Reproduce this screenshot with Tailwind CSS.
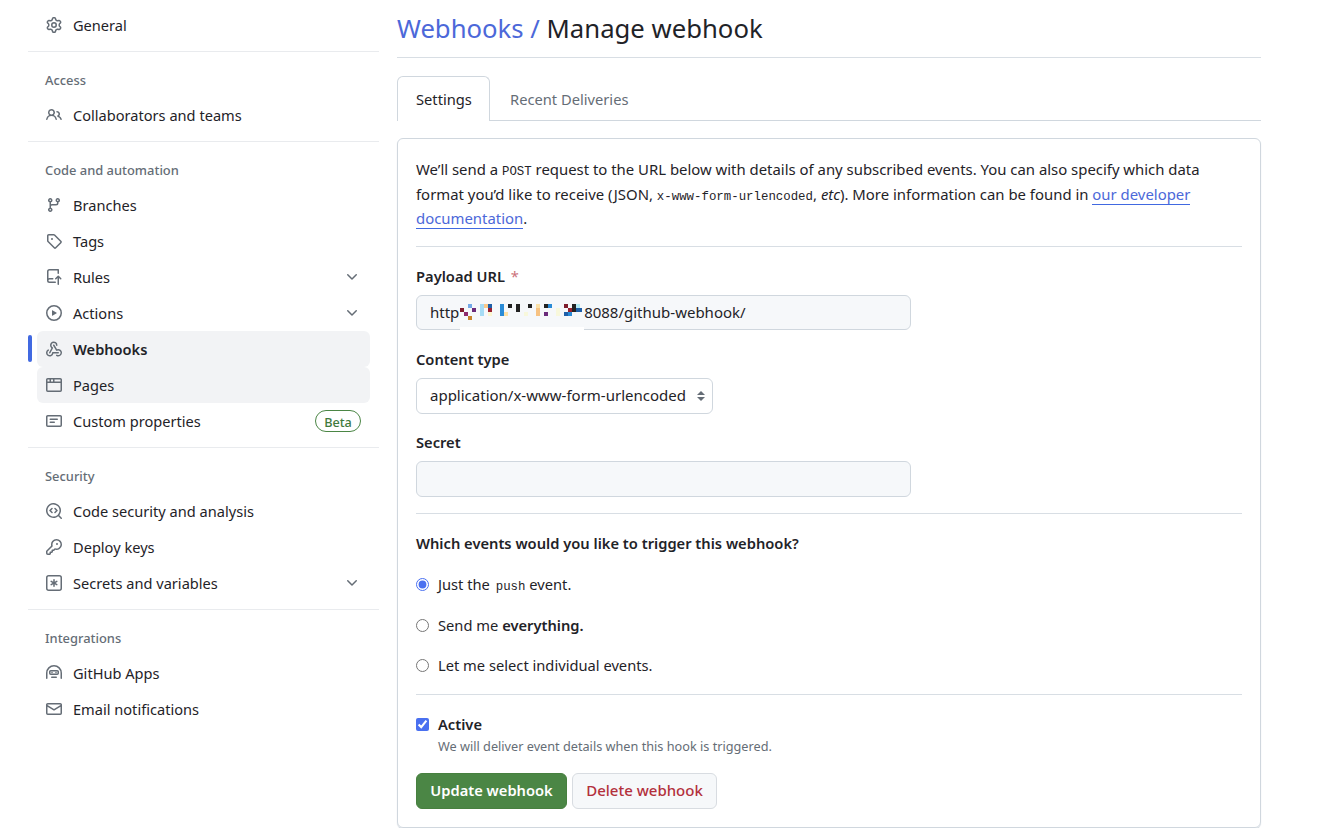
<!DOCTYPE html>
<html lang="en">
  <head>
    <meta charset="UTF-8" />
    <title>Manage webhook</title>
    <script src="https://cdn.jsdelivr.net/npm/@tailwindcss/browser@4"></script>
  </head>
  <body class="bg-white text-[#1f2328] text-[14.6px] font-['Noto_Sans','Open_Sans',sans-serif] overflow-hidden h-[828px]">
    <div class="flex items-start pl-[28px] pt-[7px]">
      <!-- Sidebar -->
      <nav class="w-[351px] shrink-0 [&_a>span]:pt-[2px]">
        <a class="flex items-center h-9 ml-[9px] mr-[9px] px-[9px] gap-[11px]">
          <svg class="size-4 fill-[#656d76]" viewBox="0 0 16 16"><path d="M8 0a8.2 8.2 0 0 1 .701.031C9.444.095 9.99.645 10.16 1.29l.288 1.107c.018.066.079.158.212.224.231.114.454.243.668.386.123.082.233.09.299.071l1.103-.303c.644-.176 1.392.021 1.82.63.27.385.506.792.704 1.218.315.675.111 1.422-.364 1.891l-.814.806c-.049.048-.098.147-.088.294.016.257.016.515 0 .772-.01.147.038.246.088.294l.814.806c.475.469.679 1.216.364 1.891a7.977 7.977 0 0 1-.704 1.217c-.428.61-1.176.807-1.82.63l-1.102-.302c-.067-.019-.177-.011-.3.071a5.909 5.909 0 0 1-.668.386c-.133.066-.194.158-.211.224l-.29 1.106c-.168.646-.715 1.196-1.458 1.26a8.006 8.006 0 0 1-1.402 0c-.743-.064-1.289-.614-1.458-1.26l-.289-1.106c-.018-.066-.079-.158-.212-.224a5.738 5.738 0 0 1-.668-.386c-.123-.082-.233-.09-.299-.071l-1.103.303c-.644.176-1.392-.021-1.82-.63a8.12 8.12 0 0 1-.704-1.218c-.315-.675-.111-1.422.363-1.891l.815-.806c.05-.048.098-.147.088-.294a6.214 6.214 0 0 1 0-.772c.01-.147-.038-.246-.088-.294l-.815-.806C.635 6.045.431 5.298.746 4.623a7.92 7.92 0 0 1 .704-1.217c.428-.61 1.176-.807 1.82-.63l1.102.302c.067.019.177.011.3-.071.214-.143.437-.272.668-.386.133-.066.194-.158.211-.224l.29-1.106C6.009.645 6.556.095 7.299.03 7.53.01 7.764 0 8 0Zm-.571 1.525c-.036.003-.108.036-.137.146l-.289 1.105c-.147.561-.549.967-.998 1.189-.173.086-.34.183-.5.29-.417.278-.97.423-1.529.27l-1.103-.303c-.109-.03-.175.016-.195.045-.22.312-.412.644-.573.99-.014.031-.021.11.059.19l.815.806c.411.406.562.957.53 1.456a4.709 4.709 0 0 0 0 .582c.032.499-.119 1.05-.53 1.456l-.815.806c-.081.08-.073.159-.059.19.162.346.353.677.573.989.02.03.085.076.195.046l1.102-.303c.56-.153 1.113-.008 1.53.27.161.107.328.204.501.29.447.222.85.629.997 1.189l.289 1.105c.029.109.101.143.137.146a6.6 6.6 0 0 0 1.142 0c.036-.003.108-.036.137-.146l.289-1.105c.147-.561.549-.967.998-1.189.173-.086.34-.183.5-.29.417-.278.97-.423 1.529-.27l1.103.303c.109.029.175-.016.195-.045.22-.313.411-.644.573-.99.014-.031.021-.11-.059-.19l-.815-.806c-.411-.406-.562-.957-.53-1.456a4.709 4.709 0 0 0 0-.582c-.032-.499.119-1.05.53-1.456l.815-.806c.081-.08.073-.159.059-.19a6.464 6.464 0 0 0-.573-.989c-.02-.03-.085-.076-.195-.046l-1.102.303c-.56.153-1.113.008-1.53-.27a4.44 4.44 0 0 0-.501-.29c-.447-.222-.85-.629-.997-1.189l-.289-1.105c-.029-.11-.101-.143-.137-.146a6.6 6.6 0 0 0-1.142 0ZM11 8a3 3 0 1 1-6 0 3 3 0 0 1 6 0ZM9.5 8a1.5 1.5 0 1 0-3.001.001A1.5 1.5 0 0 0 9.5 8Z"/></svg>
          <span>General</span>
        </a>
        <hr class="mt-2 border-[#e9ebee]" />

        <h3 class="pl-[17px] pt-[18px] pb-[6px] text-[12.9px] leading-[21px] font-medium text-[#656d76]">Access</h3>
        <a class="flex items-center h-9 ml-[9px] mr-[9px] px-[9px] gap-[11px]">
          <svg class="size-4 fill-[#656d76]" viewBox="0 0 16 16"><path d="M2 5.5a3.5 3.5 0 1 1 5.898 2.549 5.508 5.508 0 0 1 3.034 4.084.75.75 0 1 1-1.482.235 4 4 0 0 0-7.9 0 .75.75 0 0 1-1.482-.236A5.507 5.507 0 0 1 3.102 8.05 3.493 3.493 0 0 1 2 5.5ZM11 4a3.001 3.001 0 0 1 2.22 5.018 5.01 5.01 0 0 1 2.56 3.012.749.749 0 0 1-.885.954.752.752 0 0 1-.549-.514 3.507 3.507 0 0 0-2.522-2.372.75.75 0 0 1-.574-.73v-.352a.75.75 0 0 1 .416-.672A1.5 1.5 0 0 0 11 5.5.75.75 0 0 1 11 4Zm-5.5-.5a2 2 0 1 0-.001 3.999A2 2 0 0 0 5.5 3.5Z"/></svg>
          <span>Collaborators and teams</span>
        </a>
        <hr class="mt-2 border-[#e9ebee]" />

        <h3 class="pl-[17px] pt-[18px] pb-[6px] text-[12.9px] leading-[21px] font-medium text-[#656d76]">Code and automation</h3>
        <a class="flex items-center h-9 ml-[9px] mr-[9px] px-[9px] gap-[11px]">
          <svg class="size-4 fill-[#656d76]" viewBox="0 0 16 16"><path d="M9.5 3.25a2.25 2.25 0 1 1 3 2.122V6A2.5 2.5 0 0 1 10 8.5H6a1 1 0 0 0-1 1v1.128a2.251 2.251 0 1 1-1.5 0V5.372a2.25 2.25 0 1 1 1.5 0v1.836A2.493 2.493 0 0 1 6 7h4a1 1 0 0 0 1-1v-.628A2.25 2.25 0 0 1 9.5 3.25Zm-6 0a.75.75 0 1 0 1.5 0 .75.75 0 0 0-1.5 0Zm8.25-.75a.75.75 0 1 0 0 1.5.75.75 0 0 0 0-1.5ZM4.25 12a.75.75 0 1 0 0 1.5.75.75 0 0 0 0-1.5Z"/></svg>
          <span>Branches</span>
        </a>
        <a class="flex items-center h-9 ml-[9px] mr-[9px] px-[9px] gap-[11px]">
          <svg class="size-4 fill-[#656d76]" viewBox="0 0 16 16"><path d="M1 7.775V2.75C1 1.784 1.784 1 2.75 1h5.025c.464 0 .91.184 1.238.513l6.25 6.25a1.75 1.75 0 0 1 0 2.474l-5.026 5.026a1.75 1.75 0 0 1-2.474 0l-6.25-6.25A1.752 1.752 0 0 1 1 7.775Zm1.5 0c0 .066.026.13.073.177l6.25 6.25a.25.25 0 0 0 .354 0l5.025-5.025a.25.25 0 0 0 0-.354l-6.25-6.25a.25.25 0 0 0-.177-.073H2.75a.25.25 0 0 0-.25.25ZM6 5a1 1 0 1 1 0 2 1 1 0 0 1 0-2Z"/></svg>
          <span>Tags</span>
        </a>
        <a class="flex items-center h-9 ml-[9px] mr-[9px] px-[9px] gap-[11px]">
          <svg class="size-4 fill-[#656d76]" viewBox="0 0 16 16"><path d="M1 2.5A2.5 2.5 0 0 1 3.5 0h8.75a.75.75 0 0 1 .75.75v3.5a.75.75 0 0 1-1.5 0V1.5h-8a1 1 0 0 0-1 1v6.708A2.493 2.493 0 0 1 3.5 9h3.25a.75.75 0 0 1 0 1.5H3.5a1 1 0 0 0 0 2h5.75a.75.75 0 0 1 0 1.5H3.5A2.5 2.5 0 0 1 1 11.5Zm13.23 7.79h-.001l-1.224-1.224v6.184a.75.75 0 0 1-1.5 0V9.066L10.28 10.29a.75.75 0 0 1-1.06-1.061l2.505-2.504a.75.75 0 0 1 1.06 0L15.29 9.23a.751.751 0 0 1-.018 1.042.751.751 0 0 1-1.042.018Z"/></svg>
          <span>Rules</span>
          <svg class="size-4 ml-auto mr-px fill-[#656d76]" viewBox="0 0 16 16"><path d="M12.78 5.22a.749.749 0 0 1 0 1.06l-4.25 4.25a.749.749 0 0 1-1.06 0L3.22 6.28a.749.749 0 1 1 1.06-1.06L8 8.939l3.72-3.719a.749.749 0 0 1 1.06 0Z"/></svg>
        </a>
        <a class="flex items-center h-9 ml-[9px] mr-[9px] px-[9px] gap-[11px]">
          <svg class="size-4 fill-[#656d76]" viewBox="0 0 16 16"><path d="M8 0a8 8 0 1 1 0 16A8 8 0 0 1 8 0ZM1.5 8a6.5 6.5 0 1 0 13 0 6.5 6.5 0 0 0-13 0Zm4.879-2.773 4.264 2.559a.25.25 0 0 1 0 .428l-4.264 2.559A.25.25 0 0 1 6 10.559V5.442a.25.25 0 0 1 .379-.215Z"/></svg>
          <span>Actions</span>
          <svg class="size-4 ml-auto mr-px fill-[#656d76]" viewBox="0 0 16 16"><path d="M12.78 5.22a.749.749 0 0 1 0 1.06l-4.25 4.25a.749.749 0 0 1-1.06 0L3.22 6.28a.749.749 0 1 1 1.06-1.06L8 8.939l3.72-3.719a.749.749 0 0 1 1.06 0Z"/></svg>
        </a>
        <a class="relative flex items-center h-9 ml-[9px] mr-[9px] px-[9px] gap-[11px] rounded-md bg-[#f2f3f5] font-semibold">
          <span class="absolute -left-[9px] top-[4px] h-[27px] w-[4px] rounded-md bg-[#4169e1]"></span>
          <svg class="size-4 fill-[#656d76]" viewBox="0 0 16 16"><path d="M5.5 4.25a2.25 2.25 0 0 1 4.5 0 .75.75 0 0 0 1.5 0 3.75 3.75 0 1 0-6.14 2.889l-2.272 4.258a.75.75 0 0 0 1.324.706L7 7.25a.75.75 0 0 0-.309-1.015A2.25 2.25 0 0 1 5.5 4.25Z"/><path d="M7.364 3.607a.75.75 0 0 1 1.03.257l2.608 4.349a3.75 3.75 0 1 1-.628 6.785.75.75 0 0 1 .752-1.299 2.25 2.25 0 1 0-.033-3.88.75.75 0 0 1-1.03-.256L7.107 4.636a.75.75 0 0 1 .257-1.03Z"/><path d="M2.9 8.776A.75.75 0 0 1 2.625 9.8 2.25 2.25 0 1 0 6 11.75a.75.75 0 0 1 .75-.751h5.5a.75.75 0 0 1 0 1.5H7.425a3.751 3.751 0 1 1-5.55-3.998.75.75 0 0 1 1.024.274Z"/></svg>
          <span>Webhooks</span>
        </a>
        <a class="flex items-center h-9 ml-[9px] mr-[9px] px-[9px] gap-[11px] rounded-md bg-[#f2f3f5]">
          <svg class="size-4 fill-[#656d76]" viewBox="0 0 16 16"><path d="M0 2.75C0 1.784.784 1 1.75 1h12.5c.966 0 1.75.784 1.75 1.75v10.5A1.75 1.75 0 0 1 14.25 15H1.75A1.75 1.75 0 0 1 0 13.25ZM14.5 6h-13v7.25c0 .138.112.25.25.25h12.5a.25.25 0 0 0 .25-.25Zm-6-3.5v2h6V2.75a.25.25 0 0 0-.25-.25ZM5 2.5v2h2v-2Zm-3.25 0a.25.25 0 0 0-.25.25V4.5h2v-2Z"/></svg>
          <span>Pages</span>
        </a>
        <a class="flex items-center h-9 ml-[9px] mr-[9px] px-[9px] gap-[11px]">
          <svg class="size-4 fill-[#656d76]" viewBox="0 0 16 16"><path d="M0 3.75C0 2.784.784 2 1.75 2h12.5c.966 0 1.75.784 1.75 1.75v8.5A1.75 1.75 0 0 1 14.25 14H1.75A1.75 1.75 0 0 1 0 12.25Zm1.75-.25a.25.25 0 0 0-.25.25v8.5c0 .138.112.25.25.25h12.5a.25.25 0 0 0 .25-.25v-8.5a.25.25 0 0 0-.25-.25ZM3.5 6.25a.75.75 0 0 1 .75-.75h7a.75.75 0 0 1 0 1.5h-7a.75.75 0 0 1-.75-.75Zm.75 2.25h4a.75.75 0 0 1 0 1.5h-4a.75.75 0 0 1 0-1.5Z"/></svg>
          <span>Custom properties</span>
          <span class="ml-auto h-[22px] w-[46px] rounded-full border border-[#4b8645] text-[#3f7a3c] text-[12.7px] font-medium leading-[18px] text-center">Beta</span>
        </a>
        <hr class="mt-2 border-[#e9ebee]" />

        <h3 class="pl-[17px] pt-[18px] pb-[6px] text-[12.9px] leading-[21px] font-medium text-[#656d76]">Security</h3>
        <a class="flex items-center h-9 ml-[9px] mr-[9px] px-[9px] gap-[11px]">
          <svg class="size-4 fill-[#656d76]" viewBox="0 0 16 16"><path d="M8.47 4.97a.75.75 0 0 0 0 1.06L9.94 7.5 8.47 8.97a.75.75 0 1 0 1.06 1.06l2-2a.75.75 0 0 0 0-1.06l-2-2a.75.75 0 0 0-1.06 0ZM6.53 6.03a.75.75 0 0 0-1.06-1.06l-2 2a.75.75 0 0 0 0 1.06l2 2a.75.75 0 1 0 1.06-1.06L5.06 7.5l1.47-1.47Z"/><path d="M12.246 13.307a7.501 7.501 0 1 1 1.06-1.06l2.474 2.473a.749.749 0 0 1-.326 1.275.749.749 0 0 1-.734-.215ZM1.5 7.5a6.002 6.002 0 0 0 3.608 5.504 6.002 6.002 0 0 0 6.486-1.117.748.748 0 0 1 .292-.293A6 6 0 1 0 1.5 7.5Z"/></svg>
          <span>Code security and analysis</span>
        </a>
        <a class="flex items-center h-9 ml-[9px] mr-[9px] px-[9px] gap-[11px]">
          <svg class="size-4 fill-[#656d76]" viewBox="0 0 16 16"><path d="M10.5 0a5.499 5.499 0 1 1-1.288 10.848l-.932.932a.749.749 0 0 1-.53.22H7v.75a.749.749 0 0 1-.22.53l-.5.5a.749.749 0 0 1-.53.22H5v.75a.749.749 0 0 1-.22.53l-.5.5a.749.749 0 0 1-.53.22h-2A1.75 1.75 0 0 1 0 14.25v-2c0-.199.079-.389.22-.53l4.932-4.932A5.5 5.5 0 0 1 10.5 0Zm-4 5.5c-.001.431.069.86.205 1.269a.75.75 0 0 1-.181.768L1.5 12.56v1.69c0 .138.112.25.25.25h1.69l.06-.06v-1.19a.75.75 0 0 1 .75-.75h1.19l.06-.06v-1.19a.75.75 0 0 1 .75-.75h1.19l1.023-1.025a.75.75 0 0 1 .768-.18A4 4 0 1 0 6.5 5.5ZM11 6a1 1 0 1 1 0-2 1 1 0 0 1 0 2Z"/></svg>
          <span>Deploy keys</span>
        </a>
        <a class="flex items-center h-9 ml-[9px] mr-[9px] px-[9px] gap-[11px]">
          <svg class="size-4 fill-[#656d76]" viewBox="0 0 16 16"><path d="M0 2.75A2.75 2.75 0 0 1 2.75 0h10.5A2.75 2.75 0 0 1 16 2.75v10.5A2.75 2.75 0 0 1 13.25 16H2.75A2.75 2.75 0 0 1 0 13.25ZM2.75 1.5c-.69 0-1.25.56-1.25 1.25v10.5c0 .69.56 1.25 1.25 1.25h10.5c.69 0 1.25-.56 1.25-1.25V2.75c0-.69-.56-1.25-1.25-1.25Z"/><path d="M8 4a.75.75 0 0 1 .75.75V6.7l1.69-.975a.75.75 0 0 1 .75 1.3L9.5 8l1.69.976a.75.75 0 0 1-.75 1.298L8.75 9.3v1.951a.75.75 0 0 1-1.5 0V9.299l-1.69.976a.75.75 0 0 1-.75-1.3L6.5 8l-1.69-.975a.75.75 0 0 1 .75-1.3l1.69.976V4.75A.75.75 0 0 1 8 4Z"/></svg>
          <span>Secrets and variables</span>
          <svg class="size-4 ml-auto mr-px fill-[#656d76]" viewBox="0 0 16 16"><path d="M12.78 5.22a.749.749 0 0 1 0 1.06l-4.25 4.25a.749.749 0 0 1-1.06 0L3.22 6.28a.749.749 0 1 1 1.06-1.06L8 8.939l3.72-3.719a.749.749 0 0 1 1.06 0Z"/></svg>
        </a>
        <hr class="mt-2 border-[#e9ebee]" />

        <h3 class="pl-[17px] pt-[18px] pb-[6px] text-[12.9px] leading-[21px] font-medium text-[#656d76]">Integrations</h3>
        <a class="flex items-center h-9 ml-[9px] mr-[9px] px-[9px] gap-[11px]">
          <svg class="size-4 fill-[#656d76]" viewBox="0 0 16 16"><path d="M0 8a8 8 0 0 1 16 0v5.25a.75.75 0 0 1-1.5 0V8a6.5 6.5 0 1 0-13 0v5.25a.75.75 0 0 1-1.5 0Zm3-1.25C3 5.784 3.784 5 4.75 5h6.5c.966 0 1.75.784 1.75 1.75v1.5A1.75 1.75 0 0 1 11.25 10h-6.5A1.75 1.75 0 0 1 3 8.25Zm1.75-.25a.25.25 0 0 0-.25.25v1.5c0 .138.112.25.25.25h6.5a.25.25 0 0 0 .25-.25v-1.5a.25.25 0 0 0-.25-.25ZM6 6.75a.75.75 0 1 1 0 1.5.75.75 0 0 1 0-1.5Zm4 0a.75.75 0 1 1 0 1.5.75.75 0 0 1 0-1.5ZM5.75 11.5h4.5a.75.75 0 0 1 0 1.5h-4.5a.75.75 0 0 1 0-1.5Z"/></svg>
          <span>GitHub Apps</span>
        </a>
        <a class="flex items-center h-9 ml-[9px] mr-[9px] px-[9px] gap-[11px]">
          <svg class="size-4 fill-[#656d76]" viewBox="0 0 16 16"><path d="M1.75 2h12.5c.966 0 1.75.784 1.75 1.75v8.5A1.75 1.75 0 0 1 14.25 14H1.75A1.75 1.75 0 0 1 0 12.25v-8.5C0 2.784.784 2 1.75 2ZM1.5 12.251c0 .138.112.25.25.25h12.5a.25.25 0 0 0 .25-.25V5.809L8.38 9.397a.75.75 0 0 1-.76 0L1.5 5.809v6.442Zm13-8.181v-.32a.25.25 0 0 0-.25-.25H1.75a.25.25 0 0 0-.25.25v.32L8 7.88Z"/></svg>
          <span>Email notifications</span>
        </a>
      </nav>

      <!-- Main -->
      <main class="ml-[18px] w-[864px] shrink-0 text-[14.7px]">
        <h2 class="h-[51px] border-b border-[#d8dee4] text-[25.7px] leading-[44px]"><a class="text-[#4c68d9]">Webhooks /</a> Manage webhook</h2>

        <div class="mt-[18px] flex h-[45px] border-b border-[#d0d7de]">
          <div class="h-[45px] w-[93px] pl-[18px] leading-[44px] bg-white border border-[#d0d7de] border-b-0 rounded-t-md">Settings</div>
          <div class="pl-[20px] leading-[46px] text-[#656d76]">Recent Deliveries</div>
        </div>

        <form class="mt-[17px] h-[690px] border border-[#d0d7de] rounded-md px-[18px] pt-[18px] shadow-[0_1px_1px_#d0d7de]">
          <p class="text-[14.9px] leading-[24.5px] h-[90px] border-b border-[#d8dee4]">
            We’ll send a <code class="font-['Liberation_Mono',monospace] text-[12.4px] leading-none">POST</code> request to the URL below with details of any subscribed events. You can also specify which data<br />format you’d like to receive (JSON, <code class="font-['Liberation_Mono',monospace] text-[12.4px] leading-none">x-www-form-urlencoded</code>, <em>etc</em>). More information can be found in <a class="text-[#4c68d9] border-b border-[#4169e1]">our developer<br />documentation</a>.
          </p>

          <label class="block mt-[19px] leading-[21px] font-semibold">Payload URL <span class="ml-[2px] text-[#b3303c]/70 font-normal">*</span></label>
          <div class="relative mt-[8px] w-[495px] h-[35px]">
            <input type="text" value="http                                8088/github-webhook/" class="w-full h-full px-[13px] pb-[2px] text-[15px] rounded-md border border-[#d0d7de] bg-[#f6f8fa] outline-none" />
            <!-- redacted host -->
            <svg class="absolute left-[44px] top-[9px]" width="124" height="26" viewBox="0 0 124 26" shape-rendering="crispEdges">
              <rect x="0" y="23" width="124" height="3" fill="#ffffff" />
              <rect x="8" y="0" width="4" height="4" fill="#74a9e8" />
              <rect x="0" y="4" width="4" height="4" fill="#7f1d2d" />
              <rect x="12" y="4" width="4" height="4" fill="#6b2a7a" />
              <rect x="4" y="8" width="4" height="4" fill="#8e2a6b" />
              <rect x="8" y="12" width="4" height="4" fill="#c9842a" />
              <rect x="20" y="0" width="4" height="12" fill="#a6dcf5" />
              <rect x="24" y="0" width="4" height="4" fill="#fcc98a" />
              <rect x="28" y="0" width="4" height="4" fill="#1f5fa8" />
              <rect x="28" y="4" width="4" height="4" fill="#9a2230" />
              <rect x="28" y="8" width="4" height="4" fill="#fbf6d0" />
              <rect x="40" y="0" width="4" height="12" fill="#2a8bd6" />
              <rect x="44" y="8" width="4" height="4" fill="#fbe1a8" />
              <rect x="48" y="0" width="4" height="4" fill="#222222" />
              <rect x="56" y="0" width="4" height="8" fill="#222222" />
              <rect x="64" y="8" width="4" height="4" fill="#f8f8dc" />
              <rect x="68" y="0" width="4" height="4" fill="#222222" />
              <rect x="76" y="0" width="4" height="4" fill="#fbe1a8" />
              <rect x="76" y="4" width="4" height="8" fill="#f7c282" />
              <rect x="84" y="0" width="4" height="4" fill="#222222" />
              <rect x="88" y="0" width="4" height="4" fill="#2a8bd6" />
              <rect x="84" y="8" width="4" height="4" fill="#6b2a7a" />
              <rect x="96" y="4" width="4" height="8" fill="#f8f8dc" />
              <rect x="104" y="0" width="4" height="4" fill="#7f1d2d" />
              <rect x="108" y="4" width="4" height="4" fill="#9a2230" />
              <rect x="112" y="0" width="4" height="4" fill="#222222" />
              <rect x="116" y="0" width="4" height="4" fill="#b5ecf5" />
              <rect x="104" y="8" width="4" height="4" fill="#1f5fa8" />
              <rect x="108" y="8" width="4" height="4" fill="#2a8bd6" />
              <rect x="112" y="4" width="4" height="4" fill="#222222" />
              <rect x="116" y="4" width="6" height="4" fill="#1f5fa8" />
            </svg>
          </div>

          <label class="block mt-[19px] leading-[21px] font-semibold">Content type</label>
          <div class="relative mt-[8px] w-[297px] h-[36px]">
            <select class="appearance-none w-full h-full pl-[13px] pb-[2px] text-[15px] rounded-md border border-[#d0d7de] bg-white outline-none">
              <option>application/x-www-form-urlencoded</option>
            </select>
            <svg class="absolute right-[8px] top-[12px] fill-[#656d76]" width="8" height="12" viewBox="0 0 8 12"><path d="M4 1 8 5H0ZM4 11 0 7H8Z"/></svg>
          </div>

          <label class="block mt-[18px] leading-[21px] font-semibold">Secret</label>
          <input type="password" class="block mt-[8px] w-[495px] h-[36px] rounded-md border border-[#d0d7de] bg-[#f6f8fa] outline-none" />

          <hr class="mt-[16px] border-[#d8dee4]" />

          <p class="mt-[19px] leading-[21px] font-semibold">Which events would you like to trigger this webhook?</p>

          <label class="flex items-center mt-[20px] h-[21px] gap-[9px]">
            <input type="radio" name="events" checked class="m-0 size-[13px] accent-[#4a70f0]" />
            <span>Just the <code class="ml-[2px] font-['Liberation_Mono',monospace] text-[12.4px] leading-none">push</code> event.</span>
          </label>
          <label class="flex items-center mt-[20px] h-[21px] gap-[9px]">
            <input type="radio" name="events" class="m-0 size-[13px]" />
            <span>Send me <b class="font-semibold">everything.</b></span>
          </label>
          <label class="flex items-center mt-[19px] h-[21px] gap-[9px]">
            <input type="radio" name="events" class="m-0 size-[13px]" />
            <span>Let me select individual events.</span>
          </label>

          <hr class="mt-[18px] border-[#d8dee4]" />

          <label class="flex items-center mt-[19px] h-[21px] gap-[9px] font-semibold">
            <input type="checkbox" checked class="m-0 size-[13px] accent-[#4a70f0]" />
            <span>Active</span>
          </label>
          <p class="ml-[22px] text-[12.7px] leading-[18px] mt-[2px] text-[#656d76]">We will deliver event details when this hook is triggered.</p>

          <div class="mt-[18px] flex gap-[5px]">
            <button type="button" class="h-9 w-[151px] pb-[2px] rounded-md bg-[#4b8645] text-white font-semibold border border-[#47803f]">Update webhook</button>
            <button type="button" class="h-9 w-[145px] pb-[2px] rounded-md bg-[#f6f8fa] text-[#b3303c] text-[15px] font-medium border border-[#d8dce1]">Delete webhook</button>
          </div>
        </form>
      </main>
    </div>
  </body>
</html>
